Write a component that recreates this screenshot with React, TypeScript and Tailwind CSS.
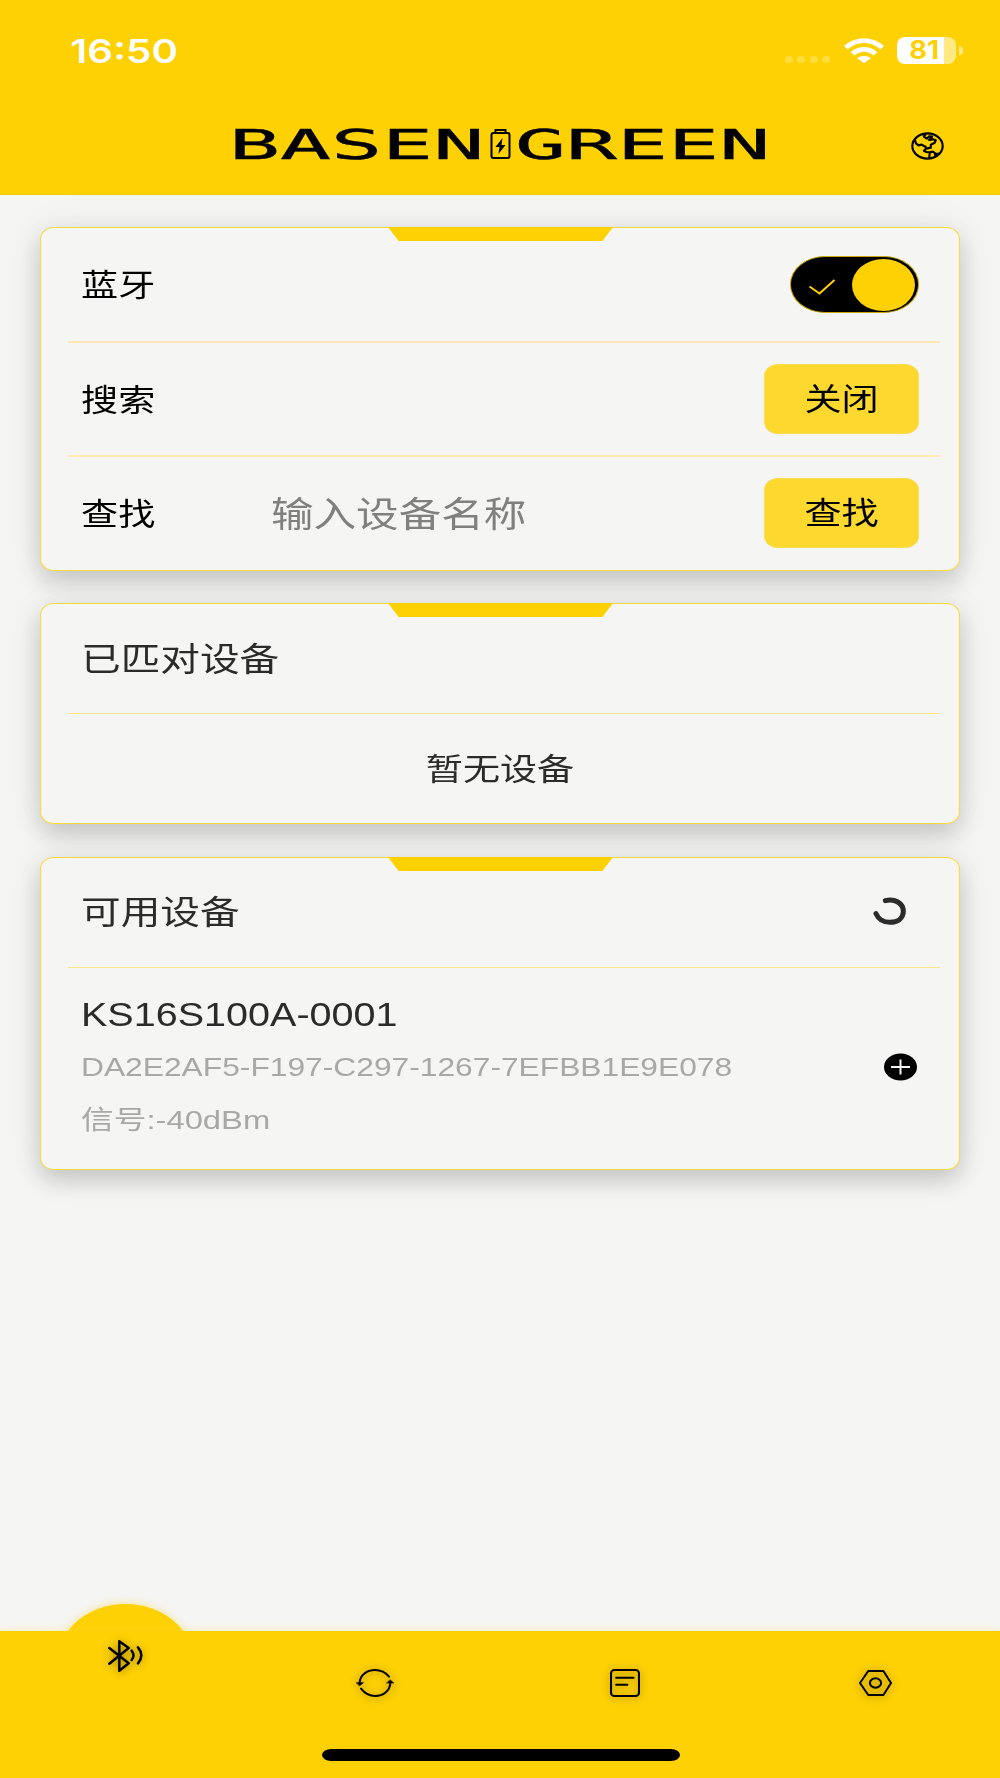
import type { ReactNode } from 'react'

const nearbyDevices = [
  { name: 'KS16S100A-0001', uuid: 'DA2E2AF5-F197-C297-1267-7EFBB1E9E078', signal: '信号:-40dBm' },
]

function StatusBar() {
  return (
    <div className="flex h-[101px] items-center justify-between pl-[70px] pr-[37px]">
      <span className="mt-px origin-left scale-x-[1.225] font-['Inter',sans-serif] text-[33px] font-semibold leading-none text-white">
        16:50
      </span>
      <div className="flex items-center">
        <div className="mt-[17px] mr-[14px] flex gap-[4.5px]">
          {[0, 1, 2, 3].map((i) => (
            <span key={i} className="h-[7px] w-2 rounded-[3px] bg-[#ffdc3a]" />
          ))}
        </div>
        <svg viewBox="0 0 120 74" preserveAspectRatio="none" className="mr-[13px] h-[25px] w-10" fill="#fff">
          <path d="M0 24Q26 1 60 1T120 24L109 34Q87 15 60 15T11 34Z" />
          <path d="M20 42Q38 27 60 27T100 42L88 52Q75 41 60 41T32 52Z" />
          <path d="M39 60Q48 53 60 53T81 60L60 74Z" />
        </svg>
        {/* Battery */}
        <div className="relative flex h-[27px] w-[59px] items-center">
          <div className="h-full w-[47px] rounded-l-[8px] bg-white" />
          <div className="h-full w-3 rounded-r-[8px] bg-[#ffe983]" />
          <span className="absolute left-3 origin-left scale-x-[1.1] font-['Inter',sans-serif] text-[25px] font-bold leading-[27px] text-[#fed105]">
            81
          </span>
        </div>
        <span className="ml-[3px] h-[9px] w-[4px] rounded-r-full bg-[#ffe983]" />
      </div>
    </div>
  )
}

function Logo() {
  return (
    <svg viewBox="0 -10 540 60" className="-my-[10px] h-[60px] w-[540px] overflow-visible">
      <g fontFamily="'DejaVu Sans Mono', monospace" fontSize="40" fill="#000" stroke="#000" strokeWidth="0.4">
        <text transform="translate(-1 33.5) scale(2.12 1)">BASEN</text>
        <text transform="translate(285 33.5) scale(2.12 1)">GREEN</text>
      </g>
      <g fill="none" stroke="#000" strokeWidth="2">
        <rect x="261.500" y="8" width="18" height="25" rx="2" />
        <path d="M265.500 8V5h10v3" />
      </g>
      <path d="M272.500 13l-7 9h4l-1 7 7-9h-4z" fill="#000" />
    </svg>
  )
}

function Globe() {
  return (
    <svg viewBox="454 337 100 84" preserveAspectRatio="none" className="mt-px h-7 w-[33px]" fill="none" stroke="#000" strokeWidth="6.5" strokeLinejoin="round">
      <ellipse cx="504" cy="379" rx="46" ry="38" />
      <path d="M465 358L469 371L477 377L486 375L499 382L499 387L493 393L501 397L511 398L509 417M511 398L520 396L530 403L541 402M526 402L529 410" />
      <path d="M487 344L498 345L493 351L502 357L509 350L518 351L509 361L520 359L529 362L526 369L514 375L514 384L501 387" />
    </svg>
  )
}

function Card({ children, className = '' }: { children: ReactNode; className?: string }) {
  return (
    <section
      className={`relative flex flex-col rounded-[14px/12px] border border-[#fdd93e] bg-[#f5f5f3] shadow-[0_10px_24px_rgba(0,0,0,0.19),0_0_40px_rgba(0,0,20,0.05)] ${className}`}
    >
      <div className="absolute -top-px left-[347px] h-[14px] w-[225px] bg-[#fed105] [clip-path:polygon(0_0,100%_0,95.3%_100%,4.7%_100%)]" />
      {children}
    </section>
  )
}

function Divider({ className = 'h-[2px] bg-[#faebb4]' }: { className?: string }) {
  return <div className={`ml-[27px] mr-[19px] shrink-0 ${className}`} />
}

function Label({ children }: { children: ReactNode }) {
  return (
    <span className="mt-[2px] inline-block origin-left scale-x-[1.216] text-[30.5px] leading-none tracking-[0.2px] text-black">
      {children}
    </span>
  )
}

function ActionButton({ children }: { children: ReactNode }) {
  return (
    <button className="flex h-[70px] w-[155px] items-center justify-center rounded-[14px/12px] border border-[#fbdc55] bg-[#fdd82f]">
      <span className="mt-px scale-x-[1.216] text-[30.5px] leading-none text-black">{children}</span>
    </button>
  )
}

function Toggle() {
  return (
    <div className="relative flex h-[57px] w-[129px] items-center rounded-[35px/28px] border border-[#c9a709] bg-black">
      <svg viewBox="0 0 28 18" className="ml-[17px] mt-[4px] h-[18px] w-7" fill="none" stroke="#fed105" strokeWidth="2">
        <path d="M1.500 8.500l10 7L26.500 2" />
      </svg>
      <div className="absolute right-[3px] h-[52px] w-[63px] rounded-[50%] bg-[#fed105]" />
    </div>
  )
}

function BottomNav() {
  return (
    <nav className="relative h-[147px] shrink-0">
      <div className="absolute -top-[27px] left-[59px] h-[109px] w-[133px] rounded-[50%] bg-[#fed105] shadow-[0_0_8px_rgba(254,209,5,0.45)]" />
      <div className="relative flex h-full flex-col bg-[#fed105] shadow-[0_-2px_6px_rgba(254,220,80,0.25)]">
        <div className="grid h-[104px] grid-cols-4 items-center justify-items-center [&_svg]:drop-shadow-[0_1px_4px_rgba(0,0,0,0.4)]">
          <svg viewBox="0 0 105 96" preserveAspectRatio="none" className="-mt-[55px] h-8 w-[35px]" fill="none" stroke="#000" strokeWidth="7.500" strokeLinecap="round" strokeLinejoin="round">
            <path d="M4 24L62 70L34 92V4L62 24L4 71" />
            <path d="M71 32Q82 47 71 60M90 22Q110 46 90 70" />
          </svg>
          <svg viewBox="0 0 114 84" preserveAspectRatio="none" className="h-7 w-[38px]" fill="none" stroke="#000" strokeWidth="6" strokeLinecap="round">
            <path d="M99 23C86 7 73 3 57 3C33 3 12 18 11 41M15 59C27 74 41 81 57 81C81 81 102 66 103 41" />
            <path d="M2 41H22L11 50ZM93 42H113L103 33Z" fill="#000" strokeWidth="2" />
          </svg>
          <svg viewBox="0 0 88 84" preserveAspectRatio="none" className="h-7 w-[30px]" fill="none" stroke="#000" strokeWidth="6" strokeLinecap="round">
            <rect x="3" y="3" width="82" height="78" rx="10" />
            <path d="M18 26H69M18 47H51" />
          </svg>
          <svg viewBox="0 0 100 78" preserveAspectRatio="none" className="h-[26px] w-[33px]" fill="none" stroke="#000" strokeWidth="6" strokeLinejoin="round">
            <path d="M28 3H74L97 39L74 75H28L3 39Z" />
            <ellipse cx="50" cy="39" rx="17" ry="14" />
          </svg>
        </div>
        <div className="ml-[322px] mt-[14px] h-3 w-[358px] rounded-[9px/6px] bg-black" />
      </div>
    </nav>
  )
}

export default function App() {
  return (
    <div className="flex h-[1778px] w-[1000px] flex-col overflow-hidden bg-[#f5f5f3] font-['Liberation_Sans','Noto_Sans_CJK_SC',sans-serif]">
      <header className="h-[195px] shrink-0 bg-[#fed105]">
        <StatusBar />
        <div className="flex items-center justify-between pl-[230px] pr-[56px] pt-[24px]">
          <Logo />
          <Globe />
        </div>
      </header>

      <main className="flex flex-1 flex-col px-10 pt-8">
        {/* Bluetooth controls */}
        <Card className="mb-8 h-[344px]">
          <div className="flex h-[113px] shrink-0 items-center justify-between pl-10 pr-10">
            <Label>蓝牙</Label>
            <Toggle />
          </div>
          <Divider />
          <div className="flex h-[112px] shrink-0 items-center justify-between pl-10 pr-10">
            <Label>搜索</Label>
            <ActionButton>关闭</ActionButton>
          </div>
          <Divider />
          <div className="flex h-[112px] items-center pl-10 pr-10">
            <div className="flex w-[190px]">
              <Label>查找</Label>
            </div>
            <input
              className="mt-[3px] mr-auto w-[240px] origin-left scale-x-[1.216] bg-transparent text-[35px] leading-none outline-none placeholder:text-[#808080]"
              placeholder="输入设备名称"
            />
            <ActionButton>查找</ActionButton>
          </div>
        </Card>

        {/* Paired devices */}
        <Card className="mb-[33px] h-[221px]">
          <h2 className="flex h-[109px] shrink-0 items-center pl-10 pt-[3px]">
            <span className="origin-left scale-x-[1.22] text-[32.5px] leading-none text-[#2b2b2b]">已匹对设备</span>
          </h2>
          <Divider className="h-px bg-[#fbe78f]" />
          <p className="flex flex-1 items-center justify-center pt-[2px]">
            <span className="scale-x-[1.216] text-[30.5px] leading-none text-[#2b2b2b]">暂无设备</span>
          </p>
        </Card>

        {/* Available devices */}
        <Card className="h-[313px]">
          <div className="flex h-[109px] shrink-0 items-center justify-between pl-10 pr-[53px]">
            <h2 className="mt-[2px] origin-left scale-x-[1.22] text-[32.5px] leading-none text-[#2b2b2b]">可用设备</h2>
            <svg viewBox="0 0 99 84" preserveAspectRatio="none" className="-mt-[3px] h-7 w-[33px]" fill="none" stroke="#2b2b2b" strokeWidth="15" strokeLinecap="round">
              <path d="M37 11C65 3 91 19 91 43C91 64 74 76 51 76C31 76 15 65 9 50" />
            </svg>
          </div>
          <Divider className="h-px bg-[#fbe78f]" />
          {nearbyDevices.map((device) => (
            <div key={device.uuid} className="flex flex-1 items-center justify-between pb-[3px] pl-10 pr-[42px]">
              <div className="flex flex-col items-start">
                <span className="origin-left scale-x-[1.18] text-[33.5px] leading-[52px] text-[#2b2b2b]">{device.name}</span>
                <span className="origin-left scale-x-[1.221] text-[26px] leading-[53px] text-[#a8a8a8]">{device.uuid}</span>
                <span className="origin-left scale-x-[1.25] text-[26.2px] leading-[52px] text-[#a8a8a8]">{device.signal}</span>
              </div>
              <svg viewBox="0 0 33 28" className="h-7 w-[33px]">
                <ellipse cx="16.5" cy="14" rx="16.5" ry="13.5" fill="#000" />
                <path d="M7 14h19M16.500 6.500v15" stroke="#f5f5f3" strokeWidth="2" />
              </svg>
            </div>
          ))}
        </Card>
      </main>

      <BottomNav />
    </div>
  )
}
